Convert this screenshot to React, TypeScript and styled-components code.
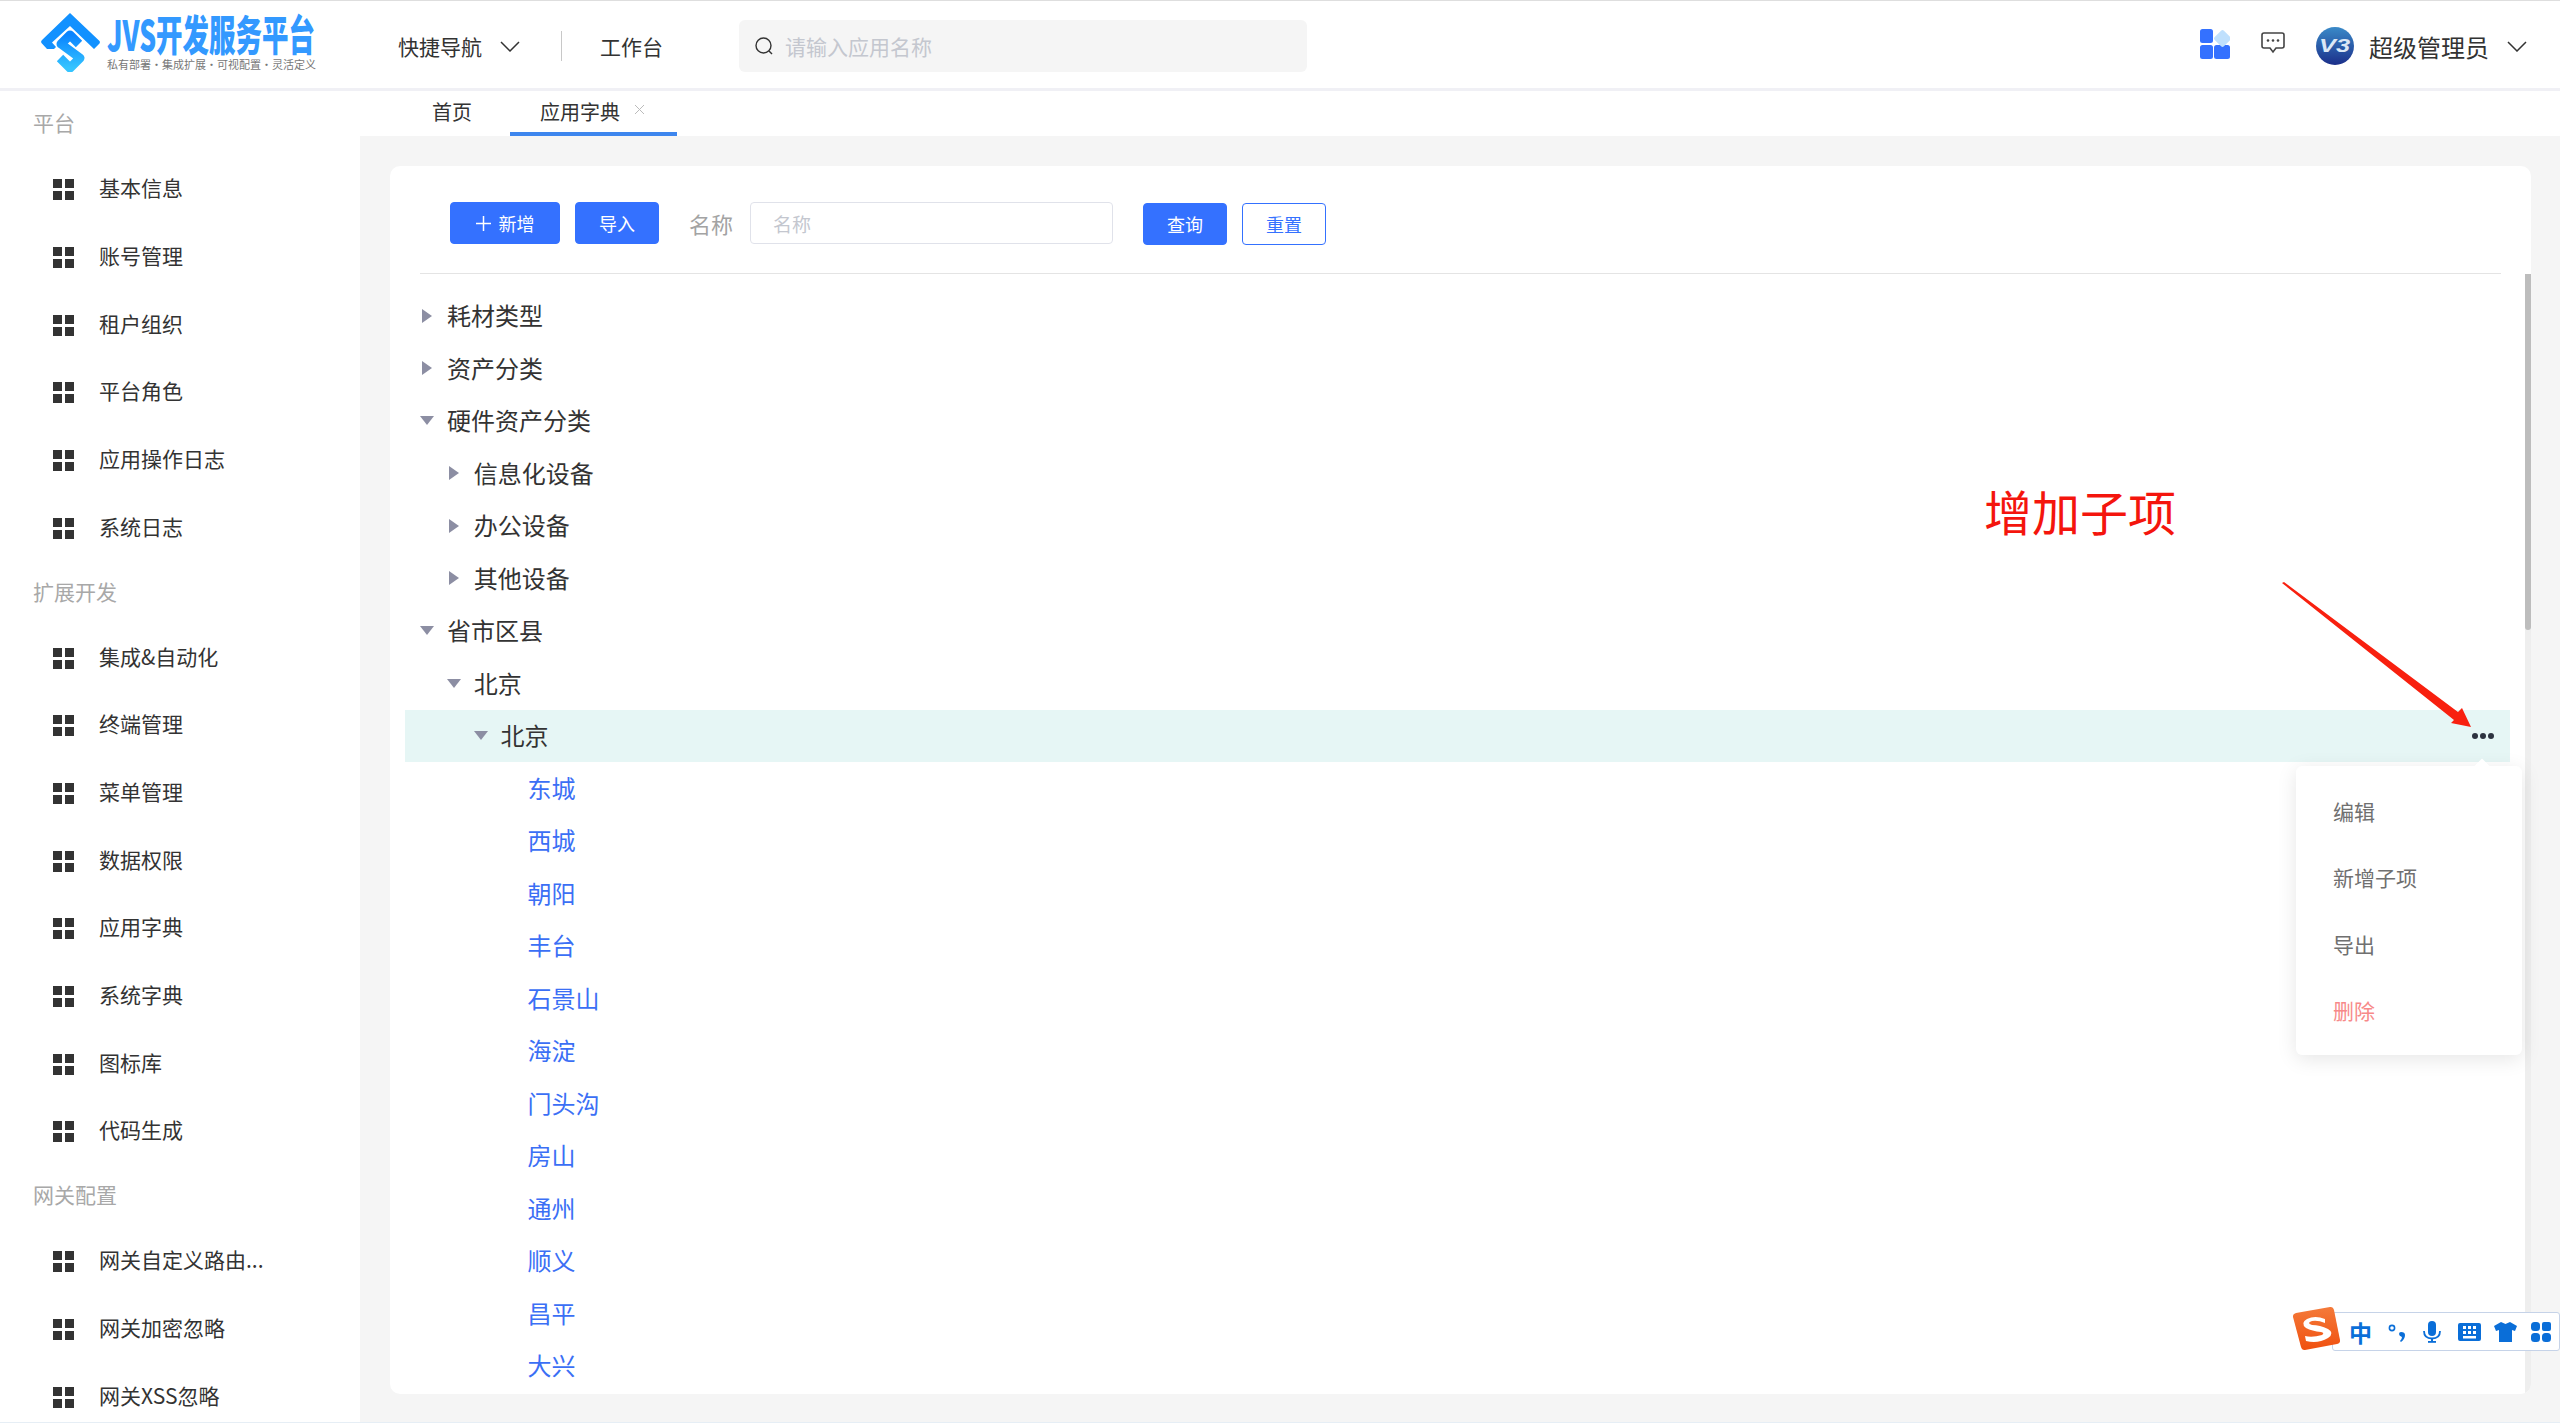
import React from "react";
import styled, { createGlobalStyle } from "styled-components";

const Global = createGlobalStyle`
  html, body { margin: 0; padding: 0; background: #fff; }
  body { font-family: "Noto Sans CJK SC", "Liberation Sans", sans-serif; }
  * { box-sizing: border-box; }
`;

const Page = styled.div`
  position: relative;
  width: 2560px;
  height: 1423px;
  overflow: hidden;
  display: flex;
  flex-direction: column;
  background: #fff;
  border-top: 1px solid #dedede;
  border-bottom: 1px solid #e6eef5;
`;

/* ---------- header ---------- */
const Header = styled.header`
  flex: none;
  height: 90px;
  display: flex;
  align-items: center;
  padding: 3px 33px 0 41px;
  border-bottom: 3px solid #f0f0f5;
`;
const Brand = styled.div`
  width: 357px;
  margin-top: -9px;
  display: flex;
  align-items: center;
  gap: 7px;
`;
const BrandMark = styled.svg`
  width: 59px;
  height: 60px;
  flex: none;
`;
const BrandText = styled.div`
  width: 209px;
  height: 60px;
  display: flex;
  flex-direction: column;
  overflow: visible;
`;
const BrandTitle = styled.div`
  font-size: 42px;
  font-weight: 900;
  line-height: 42px;
  height: 46px;
  color: #3399ff;
  white-space: nowrap;
  transform: scaleX(0.63);
  transform-origin: left center;
  width: 332px;
`;
const BrandSub = styled.div`
  font-size: 11px;
  line-height: 12px;
  color: #777;
  white-space: nowrap;
`;
const NavLink = styled.span`
  font-size: 21px;
  color: #333;
  white-space: nowrap;
`;
const NavChevron = styled.svg`
  width: 20px;
  height: 11px;
  margin-left: 18px;
  flex: none;
`;
const NavDivider = styled.div`
  width: 1px;
  height: 30px;
  background: #c8c8c8;
  margin: 0 38px 0 41px;
`;
const Search = styled.div`
  width: 568px;
  height: 52px;
  margin-left: 76px;
  display: flex;
  align-items: center;
  gap: 12px;
  padding-left: 16px;
  background: #f5f5f5;
  border-radius: 6px;
`;
const SearchIcon = styled.svg`
  width: 18px;
  height: 18px;
  flex: none;
`;
const SearchText = styled.span`
  font-size: 21px;
  color: #c4c7cf;
`;
const HeaderRight = styled.div`
  margin-left: auto;
  display: flex;
  align-items: center;
`;
const AppsIcon = styled.svg`
  width: 30px;
  height: 30px;
  margin: -4px 31px 0 0;
`;
const ChatIcon = styled.svg`
  width: 24px;
  height: 22px;
  margin: -6px 31px 0 0;
`;
const Avatar = styled.svg`
  width: 38px;
  height: 38px;
  margin-right: 15px;
`;
const UserName = styled.span`
  font-size: 24px;
  color: #333;
`;

/* ---------- body ---------- */
const Body = styled.div`
  flex: 1;
  min-height: 0;
  display: flex;
`;
const Sidebar = styled.aside`
  flex: none;
  width: 360px;
  overflow: hidden;
`;
const SectionLabel = styled.div`
  height: 62.5px;
  padding-left: 33px;
  display: flex;
  align-items: center;
  font-size: 21px;
  color: #a8a8a8;
`;
const MenuItem = styled.div`
  height: 67.65px;
  padding-left: 53px;
  display: flex;
  align-items: center;
  gap: 25px;
  font-size: 21px;
  color: #333;
  white-space: nowrap;
`;
const MenuIcon = styled.svg`
  width: 21px;
  height: 21px;
  margin-top: 5px;
  flex: none;
`;
const Main = styled.main`
  flex: 1;
  min-width: 0;
  display: flex;
  flex-direction: column;
`;
const Tabs = styled.nav`
  flex: none;
  height: 45px;
  display: flex;
  padding-left: 42px;
  gap: 8px;
`;
const Tab = styled.div<{ $active?: boolean }>`
  height: 45px;
  padding: 0 ${(p) => (p.$active ? "32px" : "30px")} 0 30px;
  display: flex;
  align-items: center;
  gap: 14px;
  font-size: 20px;
  color: #333;
  border-bottom: 4px solid ${(p) => (p.$active ? "#3d86ee" : "transparent")};
`;
const TabClose = styled.svg`
  width: 11px;
  height: 11px;
  margin-top: -5px;
`;
const Content = styled.div`
  flex: 1;
  min-height: 0;
  padding: 30px 29px 28px 30px;
  background: #f5f5f5;
`;
const Card = styled.section`
  position: relative;
  height: 100%;
  background: #fff;
  border-radius: 10px;
  overflow: hidden;
`;
const Toolbar = styled.div`
  height: 108px;
  margin: 0 30px;
  padding: 36px 0 0 30px;
  display: flex;
  align-items: flex-start;
  border-bottom: 1px solid #e4e4e4;
`;
const Button = styled.button<{ $outline?: boolean; $low?: boolean; $w: number; $ml?: number }>`
  width: ${(p) => p.$w}px;
  height: 42px;
  margin: ${(p) => (p.$low ? "1px" : "0")} 0 0 ${(p) => p.$ml ?? 0}px;
  padding: 0;
  display: flex;
  align-items: center;
  justify-content: center;
  gap: 8px;
  flex: none;
  font: inherit;
  font-size: 18px;
  border-radius: 4px;
  color: ${(p) => (p.$outline ? "#3471ff" : "#fff")};
  background: ${(p) => (p.$outline ? "#fff" : "#3471ff")};
  border: 1px solid #3471ff;
`;
const PlusIcon = styled.svg`
  width: 15px;
  height: 15px;
`;
const FieldLabel = styled.span`
  margin: 0 17px 0 30px;
  height: 42px;
  line-height: 42px;
  font-size: 22px;
  color: #a3a3a3;
`;
const Field = styled.div`
  width: 363px;
  height: 42px;
  padding-left: 22px;
  display: flex;
  align-items: center;
  font-size: 19px;
  color: #c4c7cf;
  border: 1px solid #e0e2ea;
  border-radius: 4px;
`;
const Tree = styled.div`
  padding: 15.5px 21px 0 15px;
`;
const Row = styled.div<{ $level: number; $active?: boolean }>`
  height: 52.5px;
  padding-left: ${(p) => 7 + p.$level * 26.8}px;
  padding-right: 16px;
  display: flex;
  align-items: center;
  font-size: 24px;
  color: #333;
  background: ${(p) => (p.$active ? "#e6f6f5" : "transparent")};
`;
const CaretBox = styled.span`
  width: 30px;
  margin-right: 5px;
  flex: none;
  display: flex;
  justify-content: center;
`;
const Caret = styled.span<{ $open?: boolean }>`
  width: 0;
  height: 0;
  border-style: solid;
  border-color: transparent;
  ${(p) =>
    p.$open
      ? "border-width: 9px 7.5px 0 7.5px; border-top-color: #8c8ea3;"
      : "border-width: 7.5px 0 7.5px 10px; border-left-color: #8c8ea3;"}
`;
const RowLabel = styled.span<{ $leaf?: boolean }>`
  margin-top: -2px;
  color: ${(p) => (p.$leaf ? "#3b6ff5" : "#333")};
`;
const Dots = styled.span`
  margin-left: auto;
  display: flex;
  gap: 2px;
`;
const Dot = styled.i`
  width: 6px;
  height: 6px;
  border-radius: 50%;
  background: #2d3340;
`;
const ScrollTrack = styled.div`
  position: absolute;
  top: 108px;
  right: 0;
  bottom: 0;
  width: 6px;
  background: #eeeeee;
`;
const ScrollThumb = styled.div`
  height: 356px;
  border-radius: 0 0 4px 4px;
  background: #bdbdbd;
`;

/* ---------- overlays ---------- */
const Popover = styled.div`
  position: absolute;
  left: 2296px;
  top: 765px;
  width: 226px;
  height: 289px;
  padding: 12px 0 12px 37px;
  display: flex;
  flex-direction: column;
  background: #fff;
  border-radius: 6px;
  box-shadow: 0 4px 20px rgba(0, 0, 0, 0.1);
  &::before {
    content: "";
    position: absolute;
    left: 180px;
    top: -5px;
    width: 12px;
    height: 12px;
    background: #fff;
    transform: rotate(45deg);
  }
`;
const PopItem = styled.div<{ $danger?: boolean }>`
  flex: 1;
  display: flex;
  align-items: center;
  font-size: 21px;
  color: ${(p) => (p.$danger ? "#f78989" : "#707070")};
`;
const Annotation = styled.div`
  position: absolute;
  left: 1984px;
  top: 473px;
  font-size: 48px;
  line-height: 72px;
  color: #f4150d;
  white-space: nowrap;
`;
const ArrowArt = styled.svg`
  position: absolute;
  left: 2270px;
  top: 570px;
  width: 220px;
  height: 170px;
`;
const ImeBar = styled.div`
  position: absolute;
  right: 0;
  top: 1311px;
  width: 228px;
  height: 39px;
  padding-left: 16px;
  display: flex;
  align-items: center;
  background: #fff;
  border: 1.5px solid #c6d3e8;
  border-right: 1px solid #c6d3e8;
  border-radius: 3px;
`;
const ImeLogo = styled.svg`
  position: absolute;
  left: 2292px;
  top: 1304px;
  width: 50px;
  height: 48px;
`;
const ImeChar = styled.span`
  width: 22px;
  margin-right: 17px;
  font-size: 23px;
  line-height: 30px;
  font-weight: 700;
  color: #0a6ed8;
`;
const ImeIcon = styled.svg<{ $w: number; $gap: number }>`
  width: ${(p) => p.$w}px;
  height: 24px;
  margin-right: ${(p) => p.$gap}px;
  flex: none;
  fill: #0a6ed8;
`;

/* ---------- drawings ---------- */
const Chevron = () => (
  <NavChevron viewBox="0 0 20 11">
    <polyline points="1,1 10,10 19,1" fill="none" stroke="#333" strokeWidth="1.5" />
  </NavChevron>
);
const Squares = () => (
  <MenuIcon viewBox="0 0 21 21">
    <rect x="0" y="0" width="9" height="9" fill="#333" />
    <rect x="12" y="0" width="9" height="9" fill="#333" />
    <rect x="0" y="12" width="9" height="9" fill="#333" />
    <rect x="12" y="12" width="9" height="9" fill="#333" />
  </MenuIcon>
);

type MenuEntry = { section: string } | { item: string };
const menu: MenuEntry[] = [
  { section: "平台" },
  { item: "基本信息" },
  { item: "账号管理" },
  { item: "租户组织" },
  { item: "平台角色" },
  { item: "应用操作日志" },
  { item: "系统日志" },
  { section: "扩展开发" },
  { item: "集成&自动化" },
  { item: "终端管理" },
  { item: "菜单管理" },
  { item: "数据权限" },
  { item: "应用字典" },
  { item: "系统字典" },
  { item: "图标库" },
  { item: "代码生成" },
  { section: "网关配置" },
  { item: "网关自定义路由..." },
  { item: "网关加密忽略" },
  { item: "网关XSS忽略" },
];

type Node = { label: string; level: number; state: "closed" | "open" | "leaf"; active?: boolean };
const tree: Node[] = [
  { label: "耗材类型", level: 0, state: "closed" },
  { label: "资产分类", level: 0, state: "closed" },
  { label: "硬件资产分类", level: 0, state: "open" },
  { label: "信息化设备", level: 1, state: "closed" },
  { label: "办公设备", level: 1, state: "closed" },
  { label: "其他设备", level: 1, state: "closed" },
  { label: "省市区县", level: 0, state: "open" },
  { label: "北京", level: 1, state: "open" },
  { label: "北京", level: 2, state: "open", active: true },
  ...["东城", "西城", "朝阳", "丰台", "石景山", "海淀", "门头沟", "房山", "通州", "顺义", "昌平", "大兴"].map(
    (label): Node => ({ label, level: 3, state: "leaf" })
  ),
];

export default function App() {
  return (
    <Page>
      <Global />
      <Header>
        <Brand>
          <BrandMark viewBox="11 6 59 60">
            <defs>
              <linearGradient id="logoA" x1="0" y1="0" x2="0" y2="1">
                <stop offset="0" stopColor="#0a84ff" />
                <stop offset="1" stopColor="#35c4ff" />
              </linearGradient>
            </defs>
            <path
              d="M40 7 L69.5 35 Q70.5 36.5 69 38 L64 43 L40 20 L22 36.5 L26 41 L24 43 L17 43 L11.5 37 Q10.5 35.5 12 34 Z"
              fill="#1291ff"
            />
            <path
              d="M49 38 L40 29 L31 38 L50 52 L40 62 L30 52"
              fill="none"
              stroke="url(#logoA)"
              strokeWidth="9"
              strokeLinejoin="round"
            />
          </BrandMark>
          <BrandText>
            <BrandTitle>JVS开发服务平台</BrandTitle>
            <BrandSub>私有部署・集成扩展・可视配置・灵活定义</BrandSub>
          </BrandText>
        </Brand>
        <NavLink>快捷导航</NavLink>
        <Chevron />
        <NavDivider />
        <NavLink>工作台</NavLink>
        <Search>
          <SearchIcon viewBox="0 0 18 18">
            <circle cx="8.5" cy="8.5" r="7.5" fill="none" stroke="#333" strokeWidth="1.4" />
            <line x1="14" y1="14" x2="17" y2="17" stroke="#333" strokeWidth="1.4" />
          </SearchIcon>
          <SearchText>请输入应用名称</SearchText>
        </Search>
        <HeaderRight>
          <AppsIcon viewBox="0 0 30 30">
            <rect x="0" y="0" width="13" height="14" rx="2.5" fill="#3471ff" />
            <rect x="0" y="16" width="13" height="14" rx="2.5" fill="#3471ff" />
            <rect x="14" y="16" width="16" height="14" rx="2.5" fill="#3471ff" />
            <rect x="16" y="3" width="13" height="13" rx="2" fill="#bfe0fd" transform="rotate(45 22.5 9.5)" />
          </AppsIcon>
          <ChatIcon viewBox="0 0 24 22">
            <path
              d="M3 1 H21 Q23 1 23 3 V14 Q23 16 21 16 H15 L12 20 L9 16 H3 Q1 16 1 14 V3 Q1 1 3 1 Z"
              fill="none"
              stroke="#444"
              strokeWidth="1.6"
            />
            <circle cx="7" cy="8.5" r="1.3" fill="#444" />
            <circle cx="12" cy="8.5" r="1.3" fill="#444" />
            <circle cx="17" cy="8.5" r="1.3" fill="#444" />
          </ChatIcon>
          <Avatar viewBox="0 0 38 38">
            <defs>
              <linearGradient id="av" x1="0" y1="0" x2="0" y2="1">
                <stop offset="0" stopColor="#3a8ac8" />
                <stop offset="1" stopColor="#1b2f8a" />
              </linearGradient>
            </defs>
            <circle cx="19" cy="19" r="19" fill="url(#av)" />
            <text
              x="3"
              y="25"
              textLength="31"
              lengthAdjust="spacingAndGlyphs"
              fontSize="19"
              fontWeight="700"
              fontStyle="italic"
              fontFamily="Liberation Sans"
              fill="#dbe8f6"
            >
              V3
            </text>
          </Avatar>
          <UserName>超级管理员</UserName>
          <Chevron />
        </HeaderRight>
      </Header>
      <Body>
        <Sidebar>
          {menu.map((m, i) =>
            "section" in m ? (
              <SectionLabel key={i}>{m.section}</SectionLabel>
            ) : (
              <MenuItem key={i}>
                <Squares />
                {m.item}
              </MenuItem>
            )
          )}
        </Sidebar>
        <Main>
          <Tabs>
            <Tab>首页</Tab>
            <Tab $active>
              应用字典
              <TabClose viewBox="0 0 11 11">
                <path d="M1 1 L10 10 M10 1 L1 10" stroke="#bbb" strokeWidth="1" />
              </TabClose>
            </Tab>
          </Tabs>
          <Content>
            <Card>
              <Toolbar>
                <Button $w={110}>
                  <PlusIcon viewBox="0 0 15 15">
                    <path d="M7.5 0 V15 M0 7.5 H15" stroke="#fff" strokeWidth="1.5" />
                  </PlusIcon>
                  新增
                </Button>
                <Button $w={84} $ml={15}>导入</Button>
                <FieldLabel>名称</FieldLabel>
                <Field>名称</Field>
                <Button $w={84} $ml={30} $low>查询</Button>
                <Button $w={84} $ml={15} $low $outline>重置</Button>
              </Toolbar>
              <Tree>
                {tree.map((n, i) => (
                  <Row key={i} $level={n.level} $active={n.active}>
                    <CaretBox>{n.state !== "leaf" && <Caret $open={n.state === "open"} />}</CaretBox>
                    <RowLabel $leaf={n.state === "leaf"}>{n.label}</RowLabel>
                    {n.active && (
                      <Dots>
                        <Dot />
                        <Dot />
                        <Dot />
                      </Dots>
                    )}
                  </Row>
                ))}
              </Tree>
              <ScrollTrack>
                <ScrollThumb />
              </ScrollTrack>
            </Card>
          </Content>
        </Main>
      </Body>

      <Annotation>增加子项</Annotation>
      <ArrowArt viewBox="2270 570 220 170">
        <path d="M2282 582 L2284 581 L2458 711 L2462 707 L2471 726 L2451 722 L2454 719 Z" fill="#f8200f" />
      </ArrowArt>

      <Popover>
        <PopItem>编辑</PopItem>
        <PopItem>新增子项</PopItem>
        <PopItem>导出</PopItem>
        <PopItem $danger>删除</PopItem>
      </Popover>

      <ImeBar>
        <ImeChar>中</ImeChar>
        <ImeIcon $w={18} $gap={17} viewBox="0 0 18 24">
          <circle cx="4" cy="8" r="2.6" fill="none" stroke="#0a6ed8" strokeWidth="1.6" />
          <path d="M13 12 Q17 12 17 15 Q17 19 13 22 L12 21 Q14 19 14 17 Q11 16 11 14 Q11 12 13 12 Z" />
        </ImeIcon>
        <ImeIcon $w={18} $gap={17} viewBox="0 0 18 24">
          <rect x="5" y="1" width="8" height="15" rx="4" />
          <path d="M1 11 Q1 18.5 9 18.5 Q17 18.5 17 11" fill="none" stroke="#0a6ed8" strokeWidth="1.8" />
          <rect x="8" y="18" width="2" height="3" />
          <rect x="5" y="21" width="8" height="1.8" />
        </ImeIcon>
        <ImeIcon $w={23} $gap={13} viewBox="0 0 23 24">
          <path
            fillRule="evenodd"
            d="M2 3 H21 Q23 3 23 5 V19 Q23 21 21 21 H2 Q0 21 0 19 V5 Q0 3 2 3 Z M5 6 V9 H8 V6 Z M10 6 V9 H13 V6 Z M15 6 V9 H18 V6 Z M5 11 V14 H8 V11 Z M10 11 V14 H13 V11 Z M15 11 V14 H18 V11 Z M5 16 V18.5 H18 V16 Z"
          />
        </ImeIcon>
        <ImeIcon $w={23} $gap={14} viewBox="0 0 23 24">
          <path d="M7 2 L11.5 4 L16 2 L23 6 L21 11 L18 10 V22 H5 V10 L2 11 L0 6 Z" />
        </ImeIcon>
        <ImeIcon $w={20} $gap={0} viewBox="0 0 20 24">
          <rect x="0" y="2" width="9" height="9" rx="3.5" />
          <rect x="11" y="2" width="9" height="9" rx="2" />
          <rect x="0" y="13" width="9" height="9" rx="3.5" />
          <rect x="11" y="13" width="9" height="9" rx="3.5" />
        </ImeIcon>
      </ImeBar>
      <ImeLogo viewBox="0 0 50 48">
        <defs>
          <linearGradient id="ime" x1="0" y1="0" x2="0" y2="1">
            <stop offset="0" stopColor="#f47a3a" />
            <stop offset="1" stopColor="#f0500f" />
          </linearGradient>
        </defs>
        <path d="M4 8 L38 2 Q41 1.500 42 5 L48 35 Q48.500 38 45 39 L13 45 Q10 45.500 9 42 L1 12 Q0.500 9 4 8 Z" fill="url(#ime)" />
        <path
          d="M33 14 Q23 10 15 14 Q8 18 14 23 Q20 26 29 27 Q33 28 30 30 Q20 33 13 31 L14 36 Q26 39 36 33 Q43 28 36 24 Q28 20 20 20 Q14 18 20 16 Q26 15 33 18 Z"
          fill="#fff"
        />
      </ImeLogo>
    </Page>
  );
}
